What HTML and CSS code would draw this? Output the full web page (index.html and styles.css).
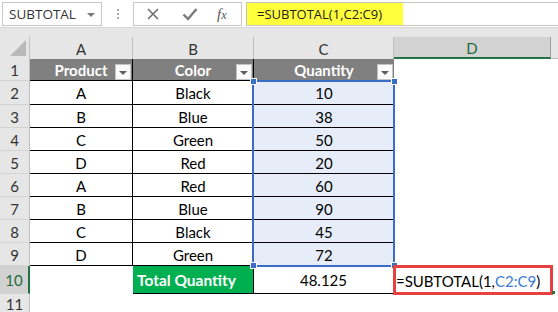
FILE: index.html
```html
<!DOCTYPE html>
<html>
<head>
<meta charset="utf-8">
<link rel="stylesheet" href="styles.css">
</head>
<body>
<div class="app">
  <div class="fbar">
    <div class="namebox"><span class="nb-text">SUBTOTAL</span><span class="nb-arrow"></span></div>
    <div class="dots"><i></i><i></i><i></i></div>
    <div class="fnbox">
      <svg class="ico" width="14" height="14" viewBox="0 0 14 14"><path d="M2 2 L12 12 M12 2 L2 12" stroke="#6f6f6f" stroke-width="1.6" fill="none"/></svg>
      <svg class="ico" width="16" height="14" viewBox="0 0 16 14"><path d="M1.5 7.5 L6 12 L14.5 2" stroke="#7a7a7a" stroke-width="2.4" fill="none"/></svg>
      <span class="fx">f<span class="fxx">x</span></span>
    </div>
    <div class="formula"><span class="hl">=SUBTOTAL(1,C2:C9)</span></div>
  </div>
  <div class="strip"></div>
  <div class="sheet">
    <div class="corner"><svg width="16" height="16" viewBox="0 0 16 16"><polygon points="16,0 16,16 0,16" fill="#b9b9b9"/></svg></div>
    <div class="ch">A</div>
    <div class="ch">B</div>
    <div class="ch">C</div>
    <div class="ch sel">D</div>
    <div class="ch end"></div>

    <div class="rh">1</div>
    <div class="c th b">Product<span class="flt"></span></div>
    <div class="c th b">Color<span class="flt"></span></div>
    <div class="c th">Quantity<span class="flt"></span></div>
    <div class="c"></div><div class="c"></div>

    <div class="rh">2</div>
    <div class="c b">A</div><div class="c b">Black</div><div class="c q">10</div><div class="c"></div><div class="c"></div>
    <div class="rh">3</div>
    <div class="c b">B</div><div class="c b">Blue</div><div class="c q">38</div><div class="c"></div><div class="c"></div>
    <div class="rh">4</div>
    <div class="c b">C</div><div class="c b">Green</div><div class="c q">50</div><div class="c"></div><div class="c"></div>
    <div class="rh">5</div>
    <div class="c b">D</div><div class="c b">Red</div><div class="c q">20</div><div class="c"></div><div class="c"></div>
    <div class="rh">6</div>
    <div class="c b">A</div><div class="c b">Red</div><div class="c q">60</div><div class="c"></div><div class="c"></div>
    <div class="rh">7</div>
    <div class="c b">B</div><div class="c b">Blue</div><div class="c q">90</div><div class="c"></div><div class="c"></div>
    <div class="rh">8</div>
    <div class="c b">C</div><div class="c b">Black</div><div class="c q">45</div><div class="c"></div><div class="c"></div>
    <div class="rh">9</div>
    <div class="c b">D</div><div class="c b">Green</div><div class="c q">72</div><div class="c"></div><div class="c"></div>

    <div class="rh sel">10</div>
    <div class="c"></div>
    <div class="c b tot">Total Quantity</div>
    <div class="c b">48.125</div>
    <div class="c fcell">=SUBTOTAL(1,<span class="ref">C2:C9</span>)</div>
    <div class="c"></div>

    <div class="rh">11</div>
    <div class="c"></div><div class="c"></div><div class="c"></div><div class="c"></div><div class="c"></div>

    <div class="selbox"></div>
    <span class="hdl h1"></span><span class="hdl h2"></span><span class="hdl h3"></span><span class="hdl h4"></span>
    <div class="redbox"></div>
    <span class="fill"></span>
  </div>
</div>
</body>
</html>
```
FILE: styles.css
```css
html, body { margin: 0; padding: 0; background: #fff; }
.app {
  width: 558px; height: 312px; overflow: hidden; position: relative;
  font-family: Lato, "Open Sans", sans-serif; background: #fff;
}
.fbar {
  height: 28px; box-sizing: border-box; display: flex; align-items: flex-start;
  padding-top: 2px; background: #fff; border-bottom: 1px solid #d6d6d6;
}
.namebox {
  margin-left: 2px; width: 100px; height: 24px; box-sizing: border-box;
  border: 1px solid #c6c6c6; display: flex; align-items: center; justify-content: space-between;
  padding: 0 6px 0 6px; font-family: "Open Sans", sans-serif; font-size: 13.5px; color: #333;
}
.nb-arrow {
  width: 0; height: 0; border-left: 4px solid transparent; border-right: 4px solid transparent;
  border-top: 4px solid #7b7b7b; margin-top: 1px;
}
.dots {
  width: 31px; height: 24px; display: flex; flex-direction: column; align-items: center;
  justify-content: center; gap: 2px;
}
.dots i { display: block; width: 2px; height: 2px; background: #a8a8a8; }
.fnbox {
  width: 109px; height: 24px; box-sizing: border-box; border: 1px solid #c6c6c6;
  display: flex; align-items: center; padding-left: 12px; gap: 0;
}
.fnbox .ico:first-child { margin-right: 22px; }
.fnbox .ico:nth-child(2) { margin-right: 19px; }
.fx { font-family: "Liberation Serif", serif; font-style: italic; font-size: 15px; color: #555; }
.fxx { font-size: 12px; }
.formula {
  margin-left: 4px; flex: 1; height: 24px; box-sizing: border-box; border: 1px solid #c6c6c6;
  border-right: none; display: flex; align-items: stretch;
}
.hl {
  background: #ffff3c; width: 156px; box-sizing: border-box; padding-left: 10px;
  display: flex; align-items: center; font-family: "Open Sans", sans-serif; font-size: 13px; color: #222;
}
.strip { height: 9px; background: #e6e6e6; }
.sheet {
  position: relative; display: grid;
  grid-template-columns: 30px 103px 121px 140px 157px 7px;
  grid-template-rows: 22px 22px 24px 23px 23px 23px 23px 23px 23px 23px 28px 20px;
}
.corner {
  background: #e6e6e6; border-right: 1px solid #c3c3c3; box-sizing: border-box;
  display: flex; align-items: flex-end; justify-content: flex-end; padding: 0 3px 3px 0;
}
.ch {
  background: #e6e6e6; border-right: 1px solid #bfbfbf; box-sizing: border-box;
  display: flex; align-items: center; justify-content: center; font-size: 15px; color: #333;
  padding-top: 1px;
}
.ch.sel { background: #d2d2d2; color: #1e6b40; border-bottom: 2px solid #217346; border-right: 1px solid #9e9e9e; }
.ch.end { border-right: none; border-bottom: 1px solid #bfbfbf; }
.rh {
  background: #e6e6e6; border-right: 1px solid #bfbfbf; border-bottom: 1px solid #d3d3d3;
  box-sizing: border-box; display: flex; align-items: center; justify-content: center;
  font-size: 15px; color: #333; padding-top: 1px;
}
.rh.sel { background: #d2d2d2; color: #256a43; border-right: 2px solid #217346; }
.c {
  box-sizing: border-box; display: flex; align-items: center; justify-content: center;
  font-size: 15px; color: #000; white-space: nowrap; padding-top: 1px;
}
.b { border-right: 1px solid #000; border-bottom: 1px solid #000; }
.th { background: #808080; color: #fff; font-weight: bold; position: relative; border-bottom: 1px solid #000; }
.q { background: #e7edf8; border-bottom: 1px solid #000; }
.tot { background: #00b050; color: #fff; font-weight: bold; justify-content: flex-start; padding-left: 4px; font-size: 15.5px; }
.fcell { justify-content: flex-start; padding-left: 2px; overflow: visible; position: relative; z-index: 1; }
.ref { color: #3a7bd5; }
.flt {
  position: absolute; right: 1px; top: 5px; width: 16px; height: 16px; box-sizing: border-box;
  background: #fbfbfb; border: 1px solid #c4c4c4;
}
.flt::after {
  content: ""; position: absolute; left: 3px; top: 6px; width: 0; height: 0;
  border-left: 4px solid transparent; border-right: 4px solid transparent; border-top: 4px solid #5f5f5f;
}
.selbox {
  position: absolute; left: 252px; top: 43px; width: 143px; height: 187px;
  box-sizing: border-box; border: 2px solid #3a6ec6; pointer-events: none;
}
.hdl {
  position: absolute; width: 5px; height: 5px; background: #3a6ec6; outline: 1px solid #fff;
}
.h1 { left: 251px; top: 42px; }
.h2 { left: 392px; top: 42px; }
.h3 { left: 251px; top: 226px; }
.h4 { left: 392px; top: 226px; }
.redbox {
  position: absolute; left: 393px; top: 228px; width: 160px; height: 30px;
  box-sizing: border-box; border: 3px solid #e8403f;
}
.fill { position: absolute; left: 552px; top: 254px; width: 3px; height: 3px; background: #217346; }
```
